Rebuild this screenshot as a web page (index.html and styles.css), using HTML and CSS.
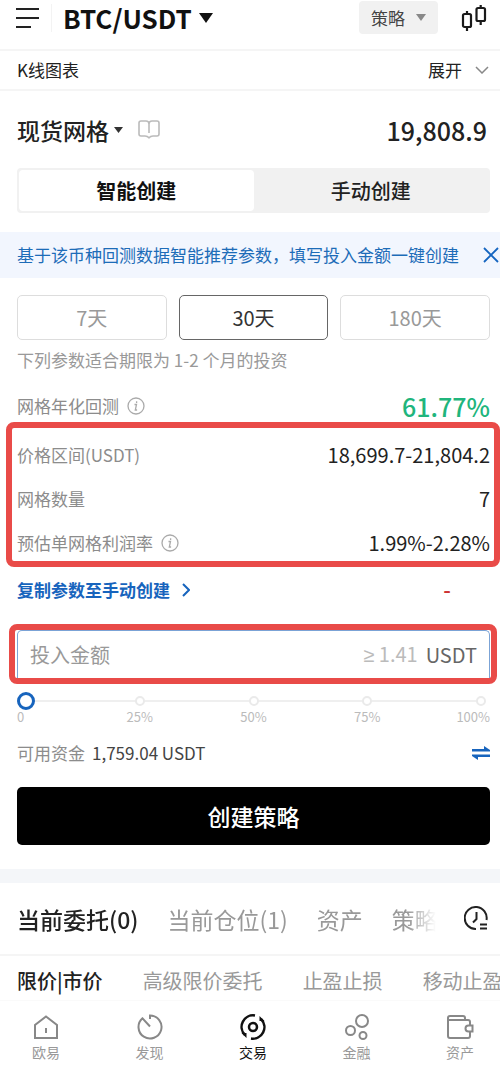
FILE: index.html
```html
<!DOCTYPE html>
<html lang="zh-CN">
<head>
<meta charset="utf-8">
<meta name="viewport" content="width=device-width, initial-scale=1">
<title>BTC/USDT 现货网格</title>
<link rel="stylesheet" href="styles.css">
</head>
<body>
<header class="topbar">
  <button class="icon-btn" aria-label="菜单">
    <svg width="24" height="20" viewBox="0 0 24 20" fill="none" stroke="#222" stroke-width="2"><path d="M0 1h23M0 10h23M0 19h15"/></svg>
  </button>
  <span class="divider"></span>
  <button class="pair">BTC/USDT
    <svg width="14" height="10" viewBox="0 0 14 10"><path d="M0 0h14L7 10z" fill="#111"/></svg>
  </button>
  <button class="mode">策略
    <svg width="10" height="7" viewBox="0 0 10 7"><path d="M0 0h10L5 7z" fill="#888"/></svg>
  </button>
  <button class="icon-btn" aria-label="K线">
    <svg width="26" height="26" viewBox="0 0 26 26" fill="none" stroke="#1a1a1a" stroke-width="2.200"><rect x="2" y="9" width="8" height="13" rx="1.500"/><path d="M6 6v3M6 22v4"/><rect x="15.500" y="3" width="8.500" height="13" rx="1.500"/><path d="M19.700 0v3M19.700 16v4"/></svg>
  </button>
</header>

<section class="chart-row">
  <span>K线图表</span>
  <button class="expand">展开
    <svg width="14" height="8" viewBox="0 0 14 8" fill="none" stroke="#888" stroke-width="1.500"><path d="M1 1l6 6 6-6"/></svg>
  </button>
</section>

<main>
  <section class="content">
    <div class="strategy">
      <button class="strategy-name">现货网格
        <svg width="9" height="6" viewBox="0 0 9 6"><path d="M0 0h9L4.500 6z" fill="#333"/></svg>
      </button>
      <svg class="book" width="22" height="19" viewBox="0 0 22 19" fill="none" stroke="#bbb" stroke-width="1.600"><path d="M11 17.800Q9.500 16 7 16H3q-2 0-2-2V3q0-2 2-2h5q3 0 3 3 0-3 3-3h5q2 0 2 2v11q0 2-2 2h-4q-2.500 0-4 1.800zM11 4v9"/></svg>
      <span class="price">19,808.9</span>
    </div>
    <div class="segmented">
      <button class="segment active">智能创建</button>
      <button class="segment">手动创建</button>
    </div>
  </section>

  <div class="notice">
    <span>基于该币种回测数据智能推荐参数，填写投入金额一键创建</span>
    <button class="icon-btn" aria-label="关闭">
      <svg width="16" height="16" viewBox="0 0 16 16" fill="none" stroke="#1565c0" stroke-width="1.800"><path d="M1 1l14 14M15 1L1 15"/></svg>
    </button>
  </div>

  <section class="content">
    <div class="periods">
      <button class="period">7天</button>
      <button class="period active">30天</button>
      <button class="period">180天</button>
    </div>
    <p class="hint">下列参数适合期限为 1-2 个月的投资</p>

    <div class="row backtest">
      <span class="label">网格年化回测
        <svg width="18" height="18" viewBox="0 0 18 18" fill="none" stroke="#aaa" stroke-width="1.300"><circle cx="9" cy="9" r="8"/><path d="M7.500 7.500h2L8.300 13h1.800M9.600 4.300v1.600"/></svg>
      </span>
      <span class="gain">61.77%</span>
    </div>

    <div class="params">
      <div class="row"><span class="label">价格区间(USDT)</span><span class="value">18,699.7-21,804.2</span></div>
      <div class="row"><span class="label">网格数量</span><span class="value">7</span></div>
      <div class="row">
        <span class="label">预估单网格利润率
          <svg width="18" height="18" viewBox="0 0 18 18" fill="none" stroke="#aaa" stroke-width="1.300"><circle cx="9" cy="9" r="8"/><path d="M7.500 7.500h2L8.300 13h1.800M9.600 4.300v1.600"/></svg>
        </span>
        <span class="value">1.99%-2.28%</span>
      </div>
    </div>

    <div class="copy-row">
      <a class="copy" href="#">复制参数至手动创建
        <svg width="8" height="14" viewBox="0 0 8 14" fill="none" stroke="#1764bd" stroke-width="2"><path d="M1 1l6 6-6 6"/></svg>
      </a>
      <span class="dash">-</span>
    </div>

    <div class="amount-frame">
      <div class="amount">
        <input class="amount-input" type="text" aria-label="投入金额" placeholder="投入金额">
        <span class="minimum"><span class="sign">≥</span> 1.41</span>
        <span class="unit">USDT</span>
      </div>
    </div>

    <div class="slider">
      <div class="stops"><i></i><i></i><i></i><i></i><i></i></div>
      <input class="range" type="range" min="0" max="100" value="0" aria-label="投入比例">
    </div>
    <div class="ticks"><span>0</span><span>25%</span><span>50%</span><span>75%</span><span>100%</span></div>

    <div class="available">
      <span class="label">可用资金</span>
      <span>1,759.04 USDT</span>
      <button class="icon-btn" aria-label="划转">
        <svg width="18" height="14" viewBox="0 0 18 14" fill="#1764bd"><path d="M0 3h12V0l6 4v1.500H0zM18 11H6v3L0 10V8.500h18z"/></svg>
      </button>
    </div>
    <button class="submit">创建策略</button>
  </section>

  <section class="orders">
    <div class="order-tabs">
      <div class="tab-list">
        <button class="tab active">当前委托(0)</button>
        <button class="tab">当前仓位(1)</button>
        <button class="tab">资产</button>
        <button class="tab">策略</button>
      </div>
      <button class="icon-btn" aria-label="历史">
        <svg width="24" height="25" viewBox="0 0 24 25" fill="none" stroke="#222" stroke-width="2"><path d="M12 23A11 11 0 1 1 22.500 14M12.500 6v7L9 16.500M16 18.500h7M16 22.500h7"/></svg>
      </button>
    </div>
    <div class="sub-tabs">
      <button class="sub-tab active">限价|市价</button>
      <button class="sub-tab">高级限价委托</button>
      <button class="sub-tab">止盈止损</button>
      <button class="sub-tab">移动止盈</button>
    </div>
  </section>
</main>

<nav class="bottom-nav">
  <a class="nav-item" href="#">
    <svg width="28" height="28" viewBox="0 0 28 28" fill="none" stroke="#888" stroke-width="2"><path d="M3 25V12L14 3.500 25 12v13zM14 15v5"/></svg>欧易</a>
  <a class="nav-item" href="#">
    <svg width="28" height="28" viewBox="0 0 28 28" fill="none" stroke="#888" stroke-width="2"><path d="M14 6V2.500A11.500 11.500 0 1 1 6.500 5.300l7.500 8.200"/></svg>发现</a>
  <a class="nav-item active" href="#">
    <svg width="28" height="28" viewBox="0 0 28 28" fill="none" stroke="#111" stroke-width="2.500"><circle cx="14" cy="14" r="4"/><path d="M16 2.500A11.500 11.500 0 0 0 6 22M12 25.500A11.500 11.500 0 0 0 22 6"/><path d="M2.500 20h5v5zM25.500 8h-5V3z" fill="#111" stroke="none"/></svg>交易</a>
  <a class="nav-item" href="#">
    <svg width="28" height="28" viewBox="0 0 28 28" fill="none" stroke="#888" stroke-width="2"><circle cx="19" cy="8" r="6"/><circle cx="7.500" cy="17.500" r="4.500"/><circle cx="20" cy="22.500" r="3.500"/></svg>金融</a>
  <a class="nav-item" href="#">
    <svg width="28" height="28" viewBox="0 0 28 28" fill="none" stroke="#888" stroke-width="2"><path d="M24 12V9q0-2-2-2H2M24 19v4q0 2-2 2H4q-2 0-2-2V5q0-2 2-2h13q2 0 2 2v2"/><path d="M26.500 12.500h-4a3 3 0 0 0 0 6h4z"/></svg>资产</a>
</nav>
</body>
</html>
```

FILE: styles.css
```css
* {
  box-sizing: border-box;
}

body {
  margin: 0;
  background: #fff;
  color: #222;
  font: 17px/26px "Noto Sans CJK SC", sans-serif;
  overflow-x: hidden;
}

button {
  display: flex;
  align-items: center;
  justify-content: center;
  padding: 0;
  border: 0;
  background: none;
  color: inherit;
  font: inherit;
  white-space: nowrap;
}

svg {
  flex: none;
}

a {
  color: inherit;
  text-decoration: none;
}

.content {
  padding: 0 10px 0 17px;
}

.label {
  display: flex;
  align-items: center;
  gap: 8px;
  color: #8c8c8c;
}

/* Header */
.topbar {
  display: flex;
  align-items: center;
  height: 51px;
  padding: 0 13px 14px 16px;
  border-bottom: 2px solid #f5f5f5;
}

.divider {
  width: 1px;
  height: 28px;
  margin: 0 11px;
  background: #f3f3f3;
}

.pair {
  gap: 7px;
  color: #111;
  font-size: 26px;
  font-weight: 700;
}

.mode {
  gap: 11px;
  height: 33px;
  margin: 0 23px 0 auto;
  padding: 0 12px;
  border-radius: 4px;
  background: #f1f1f1;
  color: #444;
}

.chart-row {
  display: flex;
  align-items: center;
  justify-content: space-between;
  height: 40px;
  padding: 0 11px 0 17px;
  border-bottom: 2px solid #f5f5f5;
}

.expand {
  gap: 13px;
}

/* Strategy selection */
.strategy {
  display: flex;
  align-items: center;
  height: 77px;
}

.strategy-name {
  gap: 5px;
  font-size: 23px;
  font-weight: 500;
}

.book {
  margin-left: 15px;
}

.price {
  margin-left: auto;
  padding-right: 3px;
  font-size: 25px;
  font-weight: 500;
}

.segmented {
  display: grid;
  grid-template-columns: 1fr 1fr;
  height: 45px;
  padding: 2px;
  border-radius: 4px;
  background: #f1f1f1;
}

.segment {
  border-radius: 4px;
  font-size: 20px;
  font-weight: 500;
}

.segment.active {
  background: #fff;
  color: #111;
  font-weight: 700;
}

.notice {
  display: flex;
  align-items: center;
  justify-content: space-between;
  height: 46px;
  margin: 19px 0 17px;
  padding: 0 1px 0 17px;
  background: #f2f6fe;
  color: #1d6cb8;
  white-space: nowrap;
}

.periods {
  display: grid;
  grid-template-columns: repeat(3, 1fr);
  gap: 12px;
}

.period {
  height: 45px;
  border: 1px solid #ddd;
  border-radius: 5px;
  color: #999;
  font-size: 20px;
}

.period.active {
  border-color: #666;
  color: #333;
}

.hint {
  margin: 0;
  color: #999;
  line-height: 40px;
}

/* Parameters */
.row {
  display: flex;
  align-items: center;
  justify-content: space-between;
}

.backtest {
  height: 42px;
  padding-top: 10px;
}

.gain {
  color: #20b57c;
  font-size: 25px;
  font-weight: 500;
}

.params {
  display: grid;
  gap: 18px;
  margin: 0 -10px 0 -11px;
  padding: 14px 4px 5px 5px;
  border: 6px solid #e94b48;
  border-radius: 8px;
}

.value {
  font-size: 20px;
}

.copy-row {
  display: flex;
  align-items: center;
  justify-content: space-between;
  height: 46px;
  margin-bottom: 11px;
  padding-right: 39px;
}

.copy {
  display: flex;
  align-items: center;
  gap: 12px;
  color: #1764bd;
  font-weight: 700;
}

.dash {
  color: #c33;
  font-family: "Liberation Sans", sans-serif;
  font-size: 23px;
}

/* Amount entry */
.amount-frame {
  margin: 0 -7px 0 -8px;
  padding: 0 1px 0 2px;
  border: 6px solid #e94b48;
  border-radius: 8px;
}

.amount {
  display: flex;
  align-items: center;
  gap: 8px;
  height: 48px;
  padding: 0 12px;
  border: 1px solid #7ba3d6;
  border-bottom: 0;
  border-radius: 5px 5px 0 0;
  font-size: 20px;
}

.amount-input {
  flex: 1;
  min-width: 0;
  padding: 0;
  border: 0;
  outline: 0;
  background: none;
  font: inherit;
}

.amount-input::placeholder {
  color: #999;
}

.minimum {
  color: #bbb;
}

.sign {
  font-family: "Noto Sans", sans-serif;
}

.unit {
  color: #666;
}

.slider {
  display: grid;
  align-items: center;
  height: 18px;
  margin-top: 8px;
}

.stops,
.range {
  grid-area: 1 / 1;
}

.stops {
  display: flex;
  justify-content: space-between;
  padding: 0 4px;
  background: linear-gradient(#efefef, #efefef) center / calc(100% - 18px) 2px no-repeat;
}

.stops i {
  width: 10px;
  height: 10px;
  border: 2px solid #eaeaea;
  border-radius: 50%;
  background: #fff;
}

.range {
  width: 100%;
  height: 18px;
  margin: 0;
  appearance: none;
  background: none;
}

.range::-webkit-slider-thumb {
  width: 18px;
  height: 18px;
  border: 3px solid #1764bd;
  border-radius: 50%;
  appearance: none;
  background: #fff;
}

.ticks {
  display: flex;
  justify-content: space-between;
  color: #bbb;
  font-size: 13px;
  line-height: 14px;
}

.ticks span {
  display: flex;
  justify-content: center;
  width: 18px;
}

.ticks span:first-child {
  justify-content: flex-start;
}

.ticks span:last-child {
  justify-content: flex-end;
}

.available {
  display: flex;
  align-items: center;
  gap: 7px;
  height: 30px;
  margin: 14px 0 19px;
  color: #444;
}

.available .icon-btn {
  margin-left: auto;
}

.submit {
  width: 100%;
  height: 58px;
  border-radius: 5px;
  background: #000;
  color: #fff;
  font-size: 23px;
  font-weight: 500;
}

/* Orders */
.orders {
  margin-top: 24px;
  border-top: 14px solid #f4f6f9;
}

.order-tabs {
  display: flex;
  align-items: center;
  justify-content: space-between;
  height: 73px;
  padding: 0 12px 0 17px;
  border-bottom: 2px solid #f5f5f5;
}

.tab-list {
  display: flex;
  flex: 1;
  gap: 29px;
  min-width: 0;
  margin-right: 24px;
  overflow: hidden;
  mask-image: linear-gradient(to left, transparent 4px, #000 32px);
}

.tab {
  color: #999;
  font-size: 23px;
  line-height: 34px;
}

.sub-tabs {
  display: flex;
  gap: 40px;
  padding: 11px 0 5px 17px;
  overflow: hidden;
}

.sub-tab {
  color: #999;
  font-size: 20px;
  line-height: 28px;
}

.tab.active,
.sub-tab.active {
  color: #222;
  font-weight: 500;
}

/* Bottom navigation */
.bottom-nav {
  display: flex;
  justify-content: space-between;
  padding: 12px 20px 11px 26px;
  border-top: 1px solid #fafafa;
  background: #fff;
}

.nav-item {
  display: flex;
  flex-direction: column;
  align-items: center;
  gap: 1px;
  width: 40px;
  color: #999;
  font-size: 14px;
  line-height: 20px;
}

.nav-item.active {
  color: #111;
}
```
